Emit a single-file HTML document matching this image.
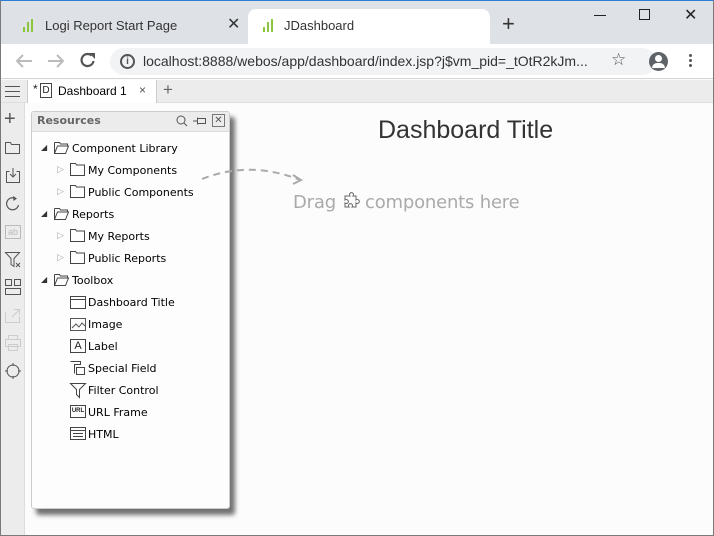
<!DOCTYPE html>
<html><head><meta charset="utf-8"><style>
*{margin:0;padding:0;box-sizing:border-box}
body{width:714px;height:536px;position:relative;overflow:hidden;background:#fbfcfb;font-family:"Liberation Sans",sans-serif;font-size:12px;color:#222}
.a{position:absolute}
.tr{font-family:"DejaVu Sans","Liberation Sans",sans-serif;font-size:11px;color:#000}
svg{position:absolute;overflow:visible}
</style></head><body>
<div class="a" style="left:0;top:0;width:714px;height:536px;border:1px solid #7a7a7a;border-top:1px solid #2b7fd6;z-index:50;pointer-events:none"></div>
<div class="a" style="left:0;top:0;width:714px;height:44px;background:#dee1e6"></div>
<div class="a" style="left:248px;top:9px;width:242px;height:35px;background:#fff;border-radius:8px 8px 0 0"></div>
<svg style="left:22px;top:18px" width="14" height="16"><g stroke="#8cc63f" stroke-width="2"><line x1="2" y1="9" x2="2" y2="14"/><line x1="6" y1="4" x2="6" y2="14"/><line x1="10" y1="1" x2="10" y2="14"/></g></svg>
<div class="a" style="left:45px;top:18px;font-size:13px;color:#333">Logi Report Start Page</div>
<div class="a" style="left:227px;top:14px;font-size:16px;color:#333">✕</div>
<svg style="left:262px;top:18px" width="14" height="16"><g stroke="#8cc63f" stroke-width="2"><line x1="2" y1="9" x2="2" y2="14"/><line x1="6" y1="4" x2="6" y2="14"/><line x1="10" y1="1" x2="10" y2="14"/></g></svg>
<div class="a" style="left:284px;top:18px;font-size:13px;color:#333">JDashboard</div>
<div class="a" style="left:502px;top:13px;font-size:22px;color:#333;line-height:22px">+</div>
<div class="a" style="left:594px;top:15px;width:12px;height:1px;background:#222"></div>
<div class="a" style="left:639px;top:9px;width:11px;height:11px;border:1px solid #222"></div>
<div class="a" style="left:684px;top:5px;font-size:16px;color:#222">✕</div>
<div class="a" style="left:0;top:44px;width:714px;height:35px;background:#fff;border-bottom:1px solid #d4d4d4"></div>
<svg style="left:15px;top:53px" width="18" height="16"><path d="M17 8H2M8 2L2 8l6 6" fill="none" stroke="#bbb" stroke-width="2"/></svg>
<svg style="left:47px;top:53px" width="18" height="16"><path d="M1 8h15M10 2l6 6-6 6" fill="none" stroke="#bbb" stroke-width="2"/></svg>
<svg style="left:80px;top:52px" width="16" height="16"><path d="M13.5 9A6 6 0 1 1 11.5 3.5" fill="none" stroke="#555" stroke-width="2.2"/><path d="M9 1h6v6z" fill="#555"/></svg>
<div class="a" style="left:110px;top:48px;width:546px;height:27px;background:#f1f3f4;border-radius:14px"></div>
<div class="a" style="left:120px;top:54px;width:15px;height:15px;border:2px solid #555;border-radius:50%;font-size:10px;font-weight:bold;text-align:center;line-height:11px;color:#555">i</div>
<div class="a" style="left:143px;top:53px;font-size:14px;color:#333">localhost:8888/webos/app/dashboard/index.jsp?j$vm_pid=_tOtR2kJm...</div>
<div class="a" style="left:611px;top:50px;font-size:17px;color:#555">☆</div>
<div class="a" style="left:649px;top:52px;width:19px;height:19px;border-radius:50%;background:#5f6368"></div>
<div class="a" style="left:655px;top:55px;width:7px;height:7px;border-radius:50%;background:#fff"></div>
<div class="a" style="left:652px;top:63px;width:13px;height:5px;border-radius:6px 6px 0 0;background:#fff"></div>
<div class="a" style="left:689px;top:54px;width:3px;height:3px;background:#555;border-radius:50%;box-shadow:0 5px 0 #555,0 10px 0 #555"></div>
<div class="a" style="left:0;top:80px;width:714px;height:23px;background:#ececec;border-bottom:1px solid #ddd"></div>
<div class="a" style="left:27px;top:80px;width:130px;height:23px;background:#fff;border-left:1px solid #ccc;border-right:1px solid #ccc"></div>
<div class="a" style="left:33px;top:82px;font-size:12px">*</div>
<div class="a" style="left:40px;top:83px;width:12px;height:15px;border:1px solid #444;font-size:10px;text-align:center;line-height:13px">D</div>
<div class="a" style="left:58px;top:84px;font-size:12px;color:#000">Dashboard 1</div>
<div class="a" style="left:139px;top:83px;font-size:12px;color:#555">×</div>
<div class="a" style="left:163px;top:80px;font-size:17px;color:#666">+</div>
<div class="a" style="left:1px;top:103px;width:24px;height:432px;background:#ececec;border-right:1px solid #ddd"></div>
<div class="a" style="left:5px;top:86px;width:15px;height:11px;border-top:1px solid #555;border-bottom:1px solid #555"></div>
<div class="a" style="left:5px;top:91px;width:15px;height:1px;background:#555"></div>
<div class="a" style="left:4px;top:109px;font-size:20px;color:#555;line-height:20px">+</div>
<svg style="left:5px;top:140px" width="16" height="14"><path d="M0.5 2.5h5l1 2h8v9h-14z" fill="none" stroke="#555"/></svg>
<svg style="left:6px;top:167px" width="14" height="16"><path d="M3.5 4.5h-3v11h13v-11h-3M7 1v9M4 7l3 3 3-3" fill="none" stroke="#555"/></svg>
<svg style="left:5px;top:196px" width="16" height="16"><path d="M13.5 9A6 6 0 1 1 10.5 2.5" fill="none" stroke="#555" stroke-width="1.2"/><path d="M8 0l4 2.5-3.5 2.5z" fill="#555"/></svg>
<div class="a" style="left:5px;top:225px;width:16px;height:14px;border:1px solid #bbb;font-size:9px;color:#bbb;text-align:center;line-height:12px">ab</div>
<svg style="left:5px;top:252px" width="16" height="16"><path d="M0.5 0.5h14l-5.5 6v8l-3-2v-6z" fill="none" stroke="#555"/><path d="M11 11l4 4M15 11l-4 4" stroke="#555"/></svg>
<svg style="left:5px;top:279px" width="16" height="16"><path d="M0.5 0.5h6v6h-6zM9.5 0.5h6v6h-6zM0.5 9.5h15v6h-15z" fill="none" stroke="#555"/></svg>
<svg style="left:5px;top:307px" width="16" height="16"><path d="M0.5 5.5v10h14v-6M7 10l7-7M9 2.5h5.5v5" fill="none" stroke="#ccc"/></svg>
<svg style="left:5px;top:335px" width="16" height="16"><path d="M3.5 4.5v-4h9v4M0.5 4.5h15v7h-15zM3.5 9.5h9v6h-9z" fill="none" stroke="#ccc"/></svg>
<svg style="left:5px;top:363px" width="16" height="16"><circle cx="8" cy="8" r="6" fill="none" stroke="#555"/><path d="M8 0v3M8 13v3M0 8h3M13 8h3" stroke="#555"/></svg>
<div class="a" style="left:378px;top:116px;font-size:25px;color:#333">Dashboard Title</div>
<div class="a" style="left:293px;top:192px;font-size:18px;color:#aaa;font-family:'DejaVu Sans',sans-serif;letter-spacing:-0.2px">Drag</div>
<svg style="left:342px;top:193px" width="18" height="18"><path d="M5 3h3a2 2 0 1 1 3 0h3v4a2 2 0 1 1 0 3v4h-4a2 2 0 1 0-3 0H3v-4a2 2 0 1 0 0-3V3z" fill="none" stroke="#666"/></svg>
<div class="a" style="left:365px;top:192px;font-size:18px;color:#aaa;font-family:'DejaVu Sans',sans-serif;letter-spacing:-0.2px">components here</div>
<div class="a" style="left:31px;top:111px;width:199px;height:398px;background:#fdfdfd;border:1px solid #ccc;border-radius:3px;box-shadow:5px 6px 5px rgba(0,0,0,0.55)"></div>
<div class="a" style="left:32px;top:112px;width:197px;height:20px;background:#ececec;border-bottom:1px solid #ddd"></div>
<div class="a" style="left:37px;top:114px;font-weight:bold;color:#666;font-family:'DejaVu Sans',sans-serif;font-size:11px">Resources</div>
<svg style="left:176px;top:115px" width="12" height="12"><circle cx="5" cy="5" r="4" fill="none" stroke="#555"/><path d="M8 8l3 3" stroke="#555"/></svg>
<svg style="left:193px;top:116px" width="14" height="10"><path d="M0 5h4M4.5 1.5v7M4.5 2.5h8v5h-8" fill="none" stroke="#555"/></svg>
<div class="a" style="left:212px;top:114px;width:13px;height:13px;border:1px solid #777;font-size:10px;line-height:11px;text-align:center;color:#555">✕</div>
<svg style="left:200px;top:168px;z-index:5" width="110" height="22"><path d="M2 11 Q50 -8 100 12" fill="none" stroke="#aaa" stroke-width="2" stroke-dasharray="7 5"/><path d="M93 7l8 5-8 4" fill="none" stroke="#aaa" stroke-width="2"/></svg>
<div class="a tr" style="left:41px;top:143px;font-size:8px;color:#333">◢</div>
<svg style="left:54px;top:142px" width="16" height="12"><path d="M0.5 0.5h5l1 1.5h7v2M0.5 0.5v11h11l3-7.5h-11l-3 7.5" fill="none" stroke="#444"/></svg>
<div class="a tr" style="left:72px;top:142px">Component Library</div>
<div class="a tr" style="left:57px;top:165px;color:#aaa;font-size:9px">▷</div>
<svg style="left:70px;top:163px" width="16" height="13"><path d="M0.5 0.5h5l1 1.5h8v10.5h-14z" fill="none" stroke="#444"/></svg>
<div class="a tr" style="left:88px;top:164px">My Components</div>
<div class="a tr" style="left:57px;top:187px;color:#aaa;font-size:9px">▷</div>
<svg style="left:70px;top:185px" width="16" height="13"><path d="M0.5 0.5h5l1 1.5h8v10.5h-14z" fill="none" stroke="#444"/></svg>
<div class="a tr" style="left:88px;top:186px">Public Components</div>
<div class="a tr" style="left:41px;top:209px;font-size:8px;color:#333">◢</div>
<svg style="left:54px;top:208px" width="16" height="12"><path d="M0.5 0.5h5l1 1.5h7v2M0.5 0.5v11h11l3-7.5h-11l-3 7.5" fill="none" stroke="#444"/></svg>
<div class="a tr" style="left:72px;top:208px">Reports</div>
<div class="a tr" style="left:57px;top:231px;color:#aaa;font-size:9px">▷</div>
<svg style="left:70px;top:229px" width="16" height="13"><path d="M0.5 0.5h5l1 1.5h8v10.5h-14z" fill="none" stroke="#444"/></svg>
<div class="a tr" style="left:88px;top:230px">My Reports</div>
<div class="a tr" style="left:57px;top:253px;color:#aaa;font-size:9px">▷</div>
<svg style="left:70px;top:251px" width="16" height="13"><path d="M0.5 0.5h5l1 1.5h8v10.5h-14z" fill="none" stroke="#444"/></svg>
<div class="a tr" style="left:88px;top:252px">Public Reports</div>
<div class="a tr" style="left:41px;top:275px;font-size:8px;color:#333">◢</div>
<svg style="left:54px;top:274px" width="16" height="12"><path d="M0.5 0.5h5l1 1.5h7v2M0.5 0.5v11h11l3-7.5h-11l-3 7.5" fill="none" stroke="#444"/></svg>
<div class="a tr" style="left:72px;top:274px">Toolbox</div>
<svg style="left:70px;top:296px" width="16" height="13"><path d="M0.5 0.5h15v12h-15zM0.5 3.5h15" fill="none" stroke="#444"/></svg>
<div class="a tr" style="left:88px;top:296px">Dashboard Title</div>
<svg style="left:70px;top:318px" width="16" height="13"><path d="M0.5 0.5h15v12h-15z" fill="none" stroke="#555"/><path d="M2 10l4-4 3 3 3-4 3 3" fill="none" stroke="#555"/></svg>
<div class="a tr" style="left:88px;top:318px">Image</div>
<div class="a" style="left:70px;top:339px;width:16px;height:14px;border:1px solid #444;font-size:11px;text-align:center;line-height:12px">A</div>
<div class="a tr" style="left:88px;top:340px">Label</div>
<svg style="left:70px;top:361px" width="16" height="14"><path d="M0.5 0.5h10v3h-6v9M6.5 6.5h8v7h-8z" fill="none" stroke="#444"/></svg>
<div class="a tr" style="left:88px;top:362px">Special Field</div>
<svg style="left:70px;top:383px" width="16" height="15"><path d="M0.5 0.5h15l-6 6v8l-3-3v-5z" fill="none" stroke="#444"/></svg>
<div class="a tr" style="left:88px;top:384px">Filter Control</div>
<div class="a" style="left:70px;top:405px;width:16px;height:13px;border:1px solid #444;font-size:6px;text-align:center;line-height:11px;font-weight:bold">URL</div>
<div class="a tr" style="left:88px;top:406px">URL Frame</div>
<svg style="left:70px;top:427px" width="16" height="13"><path d="M0.5 0.5h15v12h-15zM0.5 3.5h15M3 6.5h10M3 9.5h10" fill="none" stroke="#444"/></svg>
<div class="a tr" style="left:88px;top:428px">HTML</div>
</body></html>
